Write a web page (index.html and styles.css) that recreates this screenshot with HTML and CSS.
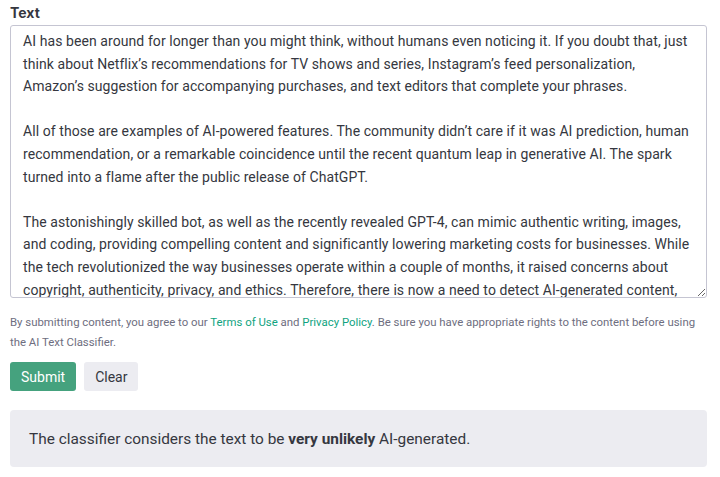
FILE: index.html
```html
<!DOCTYPE html>
<html lang="en">
<head>
<meta charset="utf-8">
<title>AI Text Classifier</title>
<link rel="stylesheet" href="styles.css">
</head>
<body>
<main class="classifier">
  <label class="field-label" for="text">Text</label>
  <textarea id="text" class="text-input">AI has been around for longer than you might think, without humans even noticing it. If you doubt that, just think about Netflix’s recommendations for TV shows and series, Instagram’s feed personalization, Amazon’s suggestion for accompanying purchases, and text editors that complete your phrases.

All of those are examples of AI-powered features. The community didn’t care if it was AI prediction, human recommendation, or a remarkable coincidence until the recent quantum leap in generative AI. The spark turned into a flame after the public release of ChatGPT.

The astonishingly skilled bot, as well as the recently revealed GPT-4, can mimic authentic writing, images, and coding, providing compelling content and significantly lowering marketing costs for businesses. While the tech revolutionized the way businesses operate within a couple of months, it raised concerns about copyright, authenticity, privacy, and ethics. Therefore, there is now a need to detect AI-generated content, and the AI Text Classifier is one of the tools built for that.</textarea>
  <p class="terms">By submitting content, you agree to our <a href="#" class="link">Terms of Use</a> and <a href="#" class="link">Privacy Policy</a>. Be sure you have appropriate rights to the content before using the AI Text Classifier.</p>
  <div class="actions">
    <button class="btn btn-primary" type="button">Submit</button>
    <button class="btn btn-secondary" type="button">Clear</button>
  </div>
  <div class="result">
    <p class="result-text">The classifier considers the text to be <strong>very unlikely</strong> AI-generated.</p>
  </div>
</main>
</body>
</html>
```

FILE: styles.css
```css
* { box-sizing: border-box; }

html, body {
  margin: 0;
  background: #ffffff;
}

body {
  font-family: Roboto, Inter, "Liberation Sans", sans-serif;
  color: #353740;
}

.classifier {
  display: flex;
  flex-direction: column;
  align-items: flex-start;
  padding: 4px 13px 0 10px;
}

.field-label {
  font-family: Inter, Roboto, sans-serif;
  font-size: 14px;
  font-weight: 700;
  line-height: 17px;
  color: #353740;
  margin-bottom: 4px;
}

.text-input {
  display: block;
  width: 697px;
  height: 273px;
  margin: 0;
  padding: 4px 12px 0 12px;
  border: 1px solid #c5c5d2;
  border-radius: 3px;
  font-family: Roboto, Inter, "Liberation Sans", sans-serif;
  font-size: 14px;
  letter-spacing: 0.08px;
  line-height: 22.6px;
  color: #353740;
  background: #ffffff;
  overflow: hidden;
  resize: both;
}

.terms {
  margin: 14px 0 0;
  font-size: 11.4px;
  line-height: 20px;
  color: #6e6e80;
}

.link {
  color: #10a37f;
  text-decoration: none;
}

.actions {
  display: flex;
  gap: 8px;
  margin-top: 10px;
}

.btn {
  height: 29px;
  border: 0;
  border-radius: 3px;
  font-family: Roboto, Inter, "Liberation Sans", sans-serif;
  font-size: 14px;
  padding: 0 11px;
  cursor: pointer;
}

.btn-primary {
  background: #45a27e;
  color: #ffffff;
}

.btn-secondary {
  background: #ececf1;
  color: #353740;
}

.result {
  margin-top: 19px;
  width: 697px;
  height: 57px;
  display: flex;
  align-items: center;
  padding: 0 19px;
  background: #ececf1;
  border-radius: 4px;
}

.result-text {
  margin: 0;
  font-size: 15.4px;
  color: #353740;
}

.result-text strong {
  font-weight: 700;
}
```
